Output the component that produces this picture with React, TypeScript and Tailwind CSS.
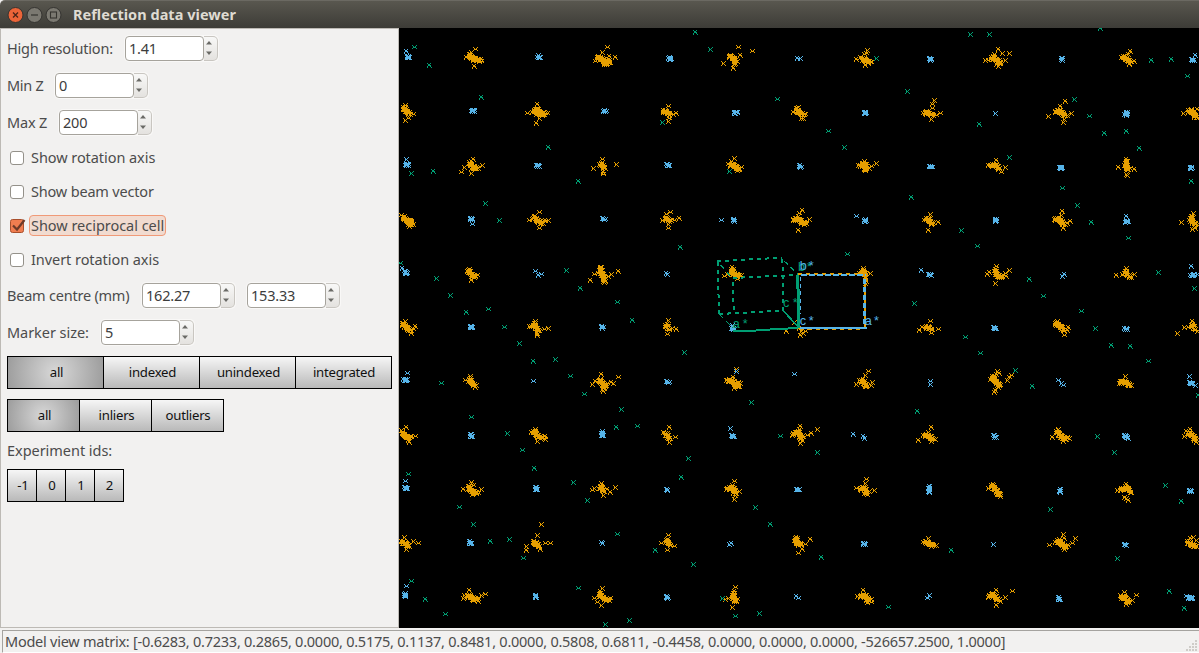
import React from "react";

type Tile = { x: number; y: number; gold: string[]; blue: string[]; green: string };

// Each cluster is "core polyline | outlying points", in thirds of a pixel inside its tile.
const tiles: Tile[] = [
  {
    x: 0,
    y: 0,
    gold: [
      "210,80 222,92 246,97|228,63 218,72 201,88 225,115",
      "594,88 612,95 632,100 616,108|626,58 611,72 648,88 590,100 617,112 630,85",
      "14,238 22,250 32,258|42,258 18,278 28,272 20,232",
      "400,252 415,245 425,258 440,256|416,230 385,257 446,256 420,272 412,285 413,262",
      "212,402 218,415 236,420|223,393 196,418 187,434 218,435 250,412 218,425",
      "606,405 616,420|611,394 583,421 652,409 613,432 613,440 600,410",
      "12,568 25,578 38,580 30,590|30,596 42,590 8,562",
      "405,566 415,578 430,586|420,552 392,577 448,577 420,600 440,578 400,574",
      "208,726 218,740 230,745|204,730 236,742 218,758 212,724",
      "604,720 608,738 615,745 617,762|603,717 587,739 573,757 638,738 657,730 628,745 598,735",
    ],
    blue: ["24,85 30,89|21,70", "416,88 424,88|419,81", "216,249 226,249|", "612,249 619,249|", "18,411 28,411|21,395", "412,411 419,414|", "214,570 221,576|220,590", "610,571 617,575|", "16,731 24,736|11,722", "|408,729 417,742 428,739"],
    green: "46,59 90,112 246,208 447,358 789,284 38,435 102,430 537,460 258,527 300,578 502,727 543,781 656,823 699,877 112,751 154,802 201,853 269,844 315,897 3,705",
  },
  {
    x: 798,
    y: 0,
    gold: [
      "-4,248 14,258|10,236 35,257 12,270 10,280 -6,252 24,260",
      "0,570 15,578|15,552 28,578 43,570 9,600 9,590 -8,577 4,560",
      "192,84 205,90 214,102|221,58 261,69 227,83 175,106 204,121 208,108",
      "592,92 602,98 615,103|606,68 574,93 600,112 620,103 598,80 603,75 586,88",
      "394,242 402,254 414,260|400,238 385,252 408,272 416,270 420,258",
      "780,253 797,258 803,262|774,255 801,240 807,218 798,275 825,255 815,262 802,230",
      "195,412 208,412 222,424|209,390 200,400 230,418 218,430 190,410",
      "586,412 600,408 602,425|598,400 580,412 620,415 634,406 602,430 612,422",
      "385,574 400,574 412,582 424,588|411,547 404,556 433,574 399,607 400,565",
      "785,572 795,580 803,588|791,608 797,558 820,582 778,578",
      "200,725 206,738 222,742|201,718 186,740 178,746 217,755 230,741",
      "590,730 600,735 602,745|596,720 584,737 616,736 600,752 600,768 603,760",
    ],
    blue: ["10,90 17,92|", "|398,92 405,92", "792,92 800,95|", "207,253 217,253|", "597,254 603,254|", "5,409 13,412|", "402,413 408,418|", "793,414 799,417|", "|169,578", "206,573 206,580|", "|574,566", "597,576 603,578|", "|768,727", "790,739 797,741|", "|4,735 8,738"],
    green: "92,14 136,64 338,214 635,90 727,190 491,310 537,359 192,431 738,508 46,657 548,679 747,827",
  },
  {
    x: 1593,
    y: 0,
    gold: [
      "185,88 200,95 212,105|204,64 218,75 237,77 165,98 175,98 192,78 205,115 225,98 198,110",
      "580,85 590,95 602,102|600,70 594,80 574,88 612,100 598,108",
      "376,250 392,248 402,262|407,221 356,264 392,236 425,255 400,283 412,262 402,275",
      "775,248 788,252 798,268|759,257 785,243 803,245",
      "182,412 198,412 208,422|198,397 174,412 225,419 213,432",
      "590,400 590,418 592,425|564,418 590,395 612,424 592,442 583,412 590,438 602,420",
      "376,572 392,578 402,590|398,551 394,562 372,575 420,580 400,600 412,585",
      "785,565 785,582 798,590|791,555 754,583 786,605 796,600 778,578",
      "195,725 200,740 215,748|198,714 172,738 178,732 238,727 225,735 196,766 208,752 228,745",
      "585,730 590,740 602,748|590,720 560,743 578,738 612,740",
    ],
    blue: ["394,92 394,98|", "784,94 792,98|797,83", "|196,256", "589,252 589,262|584,258", "388,418 396,418|", "780,418 788,419|", "196,573 196,581|", "586,582 594,580|590,566", "|397,745 404,740", "782,742 792,741|785,716 803,738"],
    green: "121,19 178,19 511,0 664,96 725,95 771,144 433,214 479,265 148,288 522,316 588,310 629,362 238,388 397,482 783,460 442,532 485,584 94,607 142,656 595,632 685,733 297,754 341,805 455,850 794,780 495,902",
  },
  {
    x: 0,
    y: 891,
    gold: [
      "10,-5 22,8 36,18|20,-12 50,5 36,25 42,12",
      "405,-5 412,10 418,20|408,-10 390,5 435,12 448,10 416,32 414,25 398,5",
      "210,162 218,172 228,182|213,155 200,166 228,187",
      "600,165 612,175 612,190 622,176|608,149 658,158 580,178 643,175 613,198 590,170 636,172",
      "10,322 22,338 35,335|21,307 50,334 30,352 8,315 28,345",
      "404,320 415,332 436,340|410,313 396,322 414,350 440,335",
      "208,485 220,500 235,505|216,471 192,493 248,492 220,512 222,480",
      "600,492 608,485 612,500|608,475 580,497 648,488 612,512 635,503 626,494 586,490",
      "8,650 22,655 28,665|16,637 42,650 58,656 22,673 5,656",
      "402,650 412,655 420,666|428,597 414,632 383,663 382,675 453,654 440,655 424,672",
      "205,810 218,818 238,825|210,796 193,820 260,808 246,812 222,828 195,812",
      "600,808 614,818 632,826|610,790 587,820 596,832 606,842 605,800 635,820",
    ],
    blue: ["213,3 221,8|", "606,5 613,8|", "14,164 24,165|26,145", "|403,170", "214,329 220,334|", "607,326 610,332|609,318", "16,488 26,490|19,470", "409,488 414,492|", "210,650 218,656|", "|606,651 609,656", "18,804 18,816|22,785", "410,810 410,818|"],
    green: "360,56 402,109 469,103 515,154 555,207 127,176 218,277 325,325 371,376 668,252 651,307 714,303 407,431 523,472 565,526 28,449 180,546 223,598 273,649 331,643 374,700 656,628 768,676 36,768 79,822 138,867 538,791 618,899 691,886",
  },
  {
    x: 798,
    y: 891,
    gold: [
      "2,0 12,12|10,-15 34,12 8,28 22,10",
      "2,325 12,340|14,308 32,337 12,353 -6,323",
      "4,645 14,660|9,630 28,665 6,675 -10,655",
      "|365,20 388,-8 408,20 420,18 406,30 402,10 415,25",
      "785,5 800,14|795,-12 763,15 820,14 800,25 773,8",
      "188,166 204,170 216,182 222,172|213,134 204,157 207,190 224,185 185,165",
      "590,165 598,175 605,185|611,139 600,152 575,177 622,172 584,165 618,182",
      "385,325 402,322 408,345|406,303 382,330 402,312 428,331 440,326 457,313 406,355 416,335",
      "780,330 795,335 803,345|800,308 759,346 790,322 775,330 812,342",
      "188,490 205,490 210,505|207,468 224,498 207,524 203,480 184,493 212,510",
      "585,492 600,490 602,505|604,464 601,475 574,491 612,500 628,496 606,510",
      "392,640 396,655 406,658|394,636 437,644 422,658 412,672 400,686 388,650",
      "780,650 795,658 805,662|790,640 776,652 813,662",
      "204,805 205,818 212,830|212,787 208,798 190,820 203,846 216,822 182,822",
      "585,815 600,812 612,826|596,797 576,815 620,822 606,834 620,832",
    ],
    blue: ["4,169 12,172|", "4,493 8,494|", "3,815 9,818|", "200,9 207,12|203,0", "|388,149 213,140", "|796,170 797,177", "200,330 206,333|196,310", "|566,329 594,334 599,339", "394,493 400,494|", "792,484 792,502|", "|192,659 199,654", "594,655 600,657|", "|395,815 399,819", "|788,820 792,812"],
    green: "58,82 259,232 757,258 347,334 457,382 70,400 50,458 271,547 315,598 85,718 470,698 173,819 282,866 212,874 669,846",
  },
  {
    x: 1593,
    y: 891,
    gold: [
      "375,-5 392,5 402,18|382,-10 416,8 402,30 412,15",
      "785,0 795,12|788,-10 762,8 743,24 803,18 775,8",
      "188,155 195,168 210,182|203,138 208,144 198,148 182,162 232,166 243,150 238,158 192,202 196,195 204,188",
      "570,170 588,172 600,182|585,155 568,175",
      "380,318 388,330 402,340 415,338|384,314 368,338 400,348 418,340",
      "775,325 788,332 798,345|781,312 762,335 770,320 798,352",
      "185,482 198,495 208,510|190,477 175,490 210,515",
      "570,495 588,488 602,500|589,477 562,496 589,520 582,518 594,526 602,505",
      "382,645 392,655 408,668|400,628 402,640 357,660 437,639 428,655 375,652 402,674 415,660",
      "772,650 785,660 800,665|790,637 780,640 800,645",
      "178,812 190,808 205,825|198,796 246,798 226,817 200,842 175,816 212,828",
      "575,815 585,818 596,832|584,802 572,810 618,810 608,825 588,838",
    ],
    blue: ["191,6 197,9|", "584,11 592,13|", "|385,167 394,175 401,181", "778,172 788,178|777,155 795,182", "190,332 197,337|", "582,331 592,339|", "390,494 390,503|", "777,496 785,500|", "|190,658", "582,659 589,661|", "384,818 390,824|", "774,818 788,819|770,814"],
    green: "107,37 152,85 545,62 600,64 655,110 256,136 306,184 503,333 553,382 706,481 753,529 362,552 63,676 562,700 717,799 763,849 805,210",
  },
];

type Point = [number, number];

function parse(text: string): Point[] {
  return text.split(" ").filter(Boolean).map((p) => p.split(",").map(Number) as Point);
}

const markerShapes = [
  parse("0,0 4,0 1,1 3,1 1,2 2,2 3,2 0,3 4,3"),
  parse("0,0 3,0 1,1 2,1 1,2 2,2 3,2 0,3 3,3 0,4 4,4"),
  parse("0,0 4,0 1,1 3,1 2,2 1,2 1,3 3,3 0,4 4,4"),
];

function cross([x, y]: Point): string {
  const px = Math.round(x / 3 - 2.2) * 3;
  const py = Math.round(y / 3 - 2.2) * 3;
  const cells = markerShapes[Math.abs(Math.round(x + y)) % 3];
  return cells.map(([cx, cy]) => `M${px + cx * 3} ${py + cy * 3}h3v3h-3z`).join("");
}

function cluster(spec: string, spread: number): string {
  const [core, extra] = spec.split("|").map(parse);
  const points: Point[] = [...extra];
  let n = 0;
  for (let i = 0; i + 1 < core.length; i++) {
    const [ax, ay] = core[i];
    const [bx, by] = core[i + 1];
    const steps = Math.max(2, Math.round(Math.hypot(bx - ax, by - ay) / 1.6));
    for (let s = 0; s <= steps; s++) {
      const t = s / steps;
      const jx = [0, 1, -1, 0, 1, -1, 0][n % 7] * spread;
      const jy = [0, -1, 1, 1, 0, -1, -1, 0, 1, 0, 0][n % 11] * spread;
      points.push([ax + (bx - ax) * t + jx, ay + (by - ay) * t + jy]);
      n++;
    }
  }
  return points.map(cross).join("");
}

function Viewer() {
  return (
    <svg viewBox="0 0 2400 1800" className="block h-[600px] w-[800px] bg-black" shapeRendering="crispEdges">
      {tiles.map((t, i) => (
        <g key={i} transform={`translate(${t.x} ${t.y})`}>
          <path fill="#e69f00" d={t.gold.map((c) => cluster(c, 3)).join("")} />
          <path fill="#56b4e9" d={t.blue.map((c) => cluster(c, 1.5)).join("")} />
          <path fill="#009e73" d={parse(t.green).map(cross).join("")} />
        </g>
      ))}
      <g transform="translate(903 636)" fill="none">
        <g stroke="#009e73" strokeWidth="6">
          <path strokeDasharray="12 12" d="M50 64L245 53M247 56L250 212M57 222L250 212M53 67L57 222M98 114L290 105M98 126L102 222" />
          <path strokeDasharray="15 12" strokeWidth="4" d="M252 63L294 103M62 75L98 115M59 224L100 265" />
          <path d="M100 272L161 272L216 268L295 264" />
          <path strokeWidth="9" d="M293 104L297 264" />
          <path strokeWidth="5" d="M250 212L297 264" />
        </g>
        <path stroke="#e69f00" strokeWidth="6" d="M294 102H494M494 104V262M300 267H490" strokeDasharray="12 12" />
        <g stroke="#56b4e9">
          <path strokeWidth="6" strokeDasharray="19 5" d="M302 104H498" />
          <path strokeWidth="9" strokeDasharray="15 9" d="M494 116V264" />
          <path strokeWidth="5" strokeDasharray="12 10" d="M301 110V222" />
          <path strokeWidth="6" d="M300 264H500" />
        </g>
        <g className="font-['Liberation_Sans',sans-serif] text-[38px]">
          <g fill="#009e73">
            <text x="294 320" y="94">b*</text>
            <text x="249 278" y="200">c*</text>
            <text x="98 128" y="264">a*</text>
          </g>
          <g fill="#56b4e9">
            <text x="299 326" y="91">b*</text>
            <text x="299 326" y="256">c*</text>
            <text x="494 522" y="256">a*</text>
          </g>
        </g>
      </g>
    </svg>
  );
}

function Spin({ value }: { value: string }) {
  return (
    <div className="flex h-[27px] rounded-[5px] bg-[#f9f8f7] p-px">
      <div className="flex h-[25px] w-[79px] items-center rounded-[4px] border border-[#a6a39c] bg-white pl-[3px] text-[14.5px] tracking-[-0.2px] text-[#3c3c3c]">
        {value}
      </div>
      <div className="flex h-[25px] w-[14px] flex-col items-center justify-center gap-[6px] rounded-r-[5px] border border-l-0 border-[#c9c6c1] bg-gradient-to-b from-[#f8f8f7] to-[#e4e2df] pr-[3px] pb-[2px]">
        <svg viewBox="0 0 6 4" className="h-[4px] w-[6px]"><path d="M0 3.5L3 0L6 3.5z" fill="#6a6a66" /></svg>
        <svg viewBox="0 0 6 4" className="h-[4px] w-[6px]"><path d="M0 .5L3 4L6 .5z" fill="#6a6a66" /></svg>
      </div>
    </div>
  );
}

function Check({ label, checked, tracking }: { label: string; checked?: boolean; tracking: string }) {
  return (
    <div className="flex h-[34px] items-center pl-[3px]">
      {checked ? (
        <svg viewBox="0 0 17 16" className="h-[16px] w-[17px]">
          <rect x=".5" y="1.5" width="13" height="13" rx="2" fill="#f07d50" stroke="#a84f2c" />
          <path d="M3 7.5L7 11.5L14.5 2" fill="none" stroke="#6d3a28" strokeWidth="2.2" />
        </svg>
      ) : (
        <div className="mr-[3px] size-[14px] rounded-[3px] border border-[#94918a] bg-white" />
      )}
      <div
        className={
          checked
            ? "ml-[2px] flex h-[21px] w-[137px] -translate-y-px items-center rounded-[4px] border border-[#f09a78] bg-[#f1dbd0] pl-px whitespace-nowrap"
            : "ml-[4px] -translate-y-px whitespace-nowrap"
        }
      >
        <span className={tracking}>{label}</span>
      </div>
    </div>
  );
}

function Toggles({ items, width, selected }: { items: string[]; width: string; selected?: number }) {
  return (
    <div className="flex h-[33px] w-fit border border-black text-[13.2px] tracking-[-0.25px] text-[#111]">
      {items.map((item, i) => (
        <div
          key={item}
          className={`flex items-center justify-center border-black not-last:border-r last:-mr-px last:pr-px pl-[2px] last:border-r last:border-r-black ${width} ${
            i === selected
              ? "bg-[radial-gradient(circle_at_center,#d8d8d8,#9c9c9c)]"
              : "bg-gradient-to-b from-[#f6f6f6] to-[#b9b9b9]"
          }`}
        >
          {item}
        </div>
      ))}
    </div>
  );
}

function TitleBar() {
  return (
    <div className="flex h-[28px] items-center rounded-tl-[5px] border-t border-[#6b6962] bg-gradient-to-b from-[#59574f] to-[#3d3c37] pl-[7px]">
      <svg viewBox="0 0 56 18" className="h-[18px] w-[56px]" fill="none">
        <circle cx="8.5" cy="9" r="7.5" fill="#ec6438" stroke="#343330" />
        <path d="M6 6.5l5 5m0-5l-5 5" stroke="#4a2418" strokeWidth="1.3" />
        <circle cx="27.5" cy="9" r="7.5" fill="#7b7971" stroke="#343330" />
        <path d="M24 9h7" stroke="#35342f" strokeWidth="1.2" />
        <circle cx="46.5" cy="9" r="7.5" fill="#7b7971" stroke="#343330" />
        <rect x="43.5" y="6" width="6" height="6" stroke="#35342f" strokeWidth="1.1" />
      </svg>
      <span className="ml-[10px] text-[14.5px] font-bold tracking-[0.03px] whitespace-nowrap text-[#dfdbd2]">Reflection data viewer</span>
    </div>
  );
}

export default function App() {
  return (
    <div className="flex h-[653px] w-[1199px] flex-col overflow-hidden bg-[#f2f1f0] font-['Noto_Sans','Open_Sans',sans-serif] text-[14.5px] leading-none text-[#4c4c4c]">
      <TitleBar />
      <div className="flex h-[600px]">
        <div className="h-[600px] w-[399px] shrink-0 border border-[#bdbab5] pt-[6px] pl-[6px]">
          <div className="flex h-[27px] items-center"><span className="w-[117px] tracking-[-0.2px]">High resolution:</span><Spin value="1.41" /></div>
          <div className="mt-[10px] flex h-[27px] items-center"><span className="w-[47px] tracking-[-0.3px]">Min Z</span><Spin value="0" /></div>
          <div className="mt-[10px] flex h-[27px] items-center"><span className="w-[51px] tracking-[-0.2px]">Max Z</span><Spin value="200" /></div>
          <div className="mt-[5px]">
            <Check label="Show rotation axis" tracking="tracking-[-0.06px]" />
            <Check label="Show beam vector" tracking="tracking-[-0.18px]" />
            <Check label="Show reciprocal cell" tracking="tracking-[-0.03px]" checked />
            <Check label="Invert rotation axis" tracking="tracking-[-0.06px]" />
          </div>
          <div className="mt-[5px] flex h-[27px] items-center"><span className="w-[134px] tracking-[-0.22px]">Beam centre (mm)</span><Spin value="162.27" /><span className="w-[10px]" /><Spin value="153.33" /></div>
          <div className="mt-[10px] flex h-[27px] items-center"><span className="w-[93px] tracking-[-0.05px]">Marker size:</span><Spin value="5" /></div>
          <div className="mt-[10px]"><Toggles items={["all", "indexed", "unindexed", "integrated"]} width="w-[96px]" selected={0} /></div>
          <div className="mt-[10px]"><Toggles items={["all", "inliers", "outliers"]} width="w-[72px]" selected={0} /></div>
          <div className="flex h-[37px] items-center tracking-[-0.04px]">Experiment ids:</div>
          <Toggles items={["-1", "0", "1", "2"]} width="w-[29px]" />
        </div>
        <Viewer />
      </div>
      <div className="h-[25px] pt-[2px] pl-[2px]">
        <div className="flex h-[23px] items-center justify-between border-t border-b border-l border-t-[#a5a39f] border-b-white border-l-[#a5a39f] pl-[2px]">
          <span className="tracking-[-0.245px] whitespace-nowrap">Model view matrix: [-0.6283, 0.7233, 0.2865, 0.0000, 0.5175, 0.1137, 0.8481, 0.0000, 0.5808, 0.6811, -0.4458, 0.0000, 0.0000, 0.0000, -526657.2500, 1.0000]</span>
          <svg viewBox="0 0 12 12" className="mt-[8px] mr-px h-[12px] w-[12px]" fill="#cfccc8">
            <path d="M9 0h2v2h-2zM6 3h2v2h-2zM9 3h2v2h-2zM3 6h2v2h-2zM6 6h2v2h-2zM9 6h2v2h-2zM0 9h2v2h-2zM3 9h2v2h-2zM6 9h2v2h-2zM9 9h2v2h-2z" />
          </svg>
        </div>
      </div>
    </div>
  );
}
